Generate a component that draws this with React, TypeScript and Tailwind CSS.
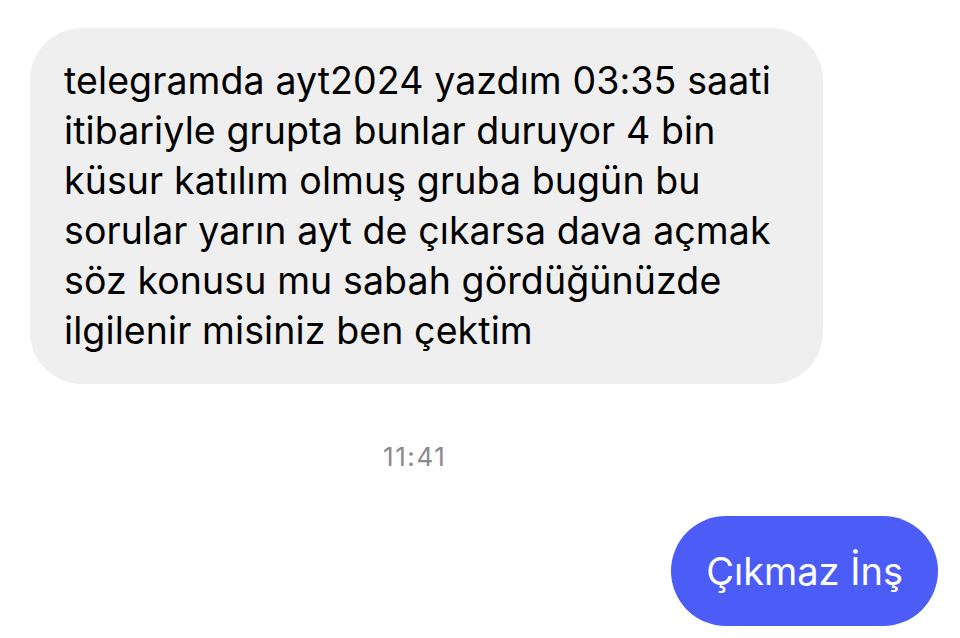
export default function App() {
	const lines = [
		"telegramda ayt2024 yazdım 03:35 saati",
		"itibariyle grupta bunlar duruyor 4 bin",
		"küsur katılım olmuş gruba bugün bu",
		"sorular yarın ayt de çıkarsa dava açmak",
		"söz konusu mu sabah gördüğünüzde",
		"ilgilenir misiniz ben çektim",
	];

	return (
		<div className="w-[960px] h-[638px] bg-white overflow-hidden font-['Inter','Noto_Sans',sans-serif]">
			{/* --Incoming Message-- */}
			<div className="pt-[28px] pl-[30px]">
				<div className="w-[793px] h-[356px] bg-[#efefef] rounded-[52px] pl-[34px] pt-[28px]">
					{lines.map(line => (
						<div key={line} className="text-[37.5px] leading-[50px] text-black tracking-[0.1px] whitespace-nowrap">
							{line}
						</div>
					))}
				</div>
			</div>
			{/* --Timestamp-- */}
			<div className="mt-[58px] pl-[383px] text-[26px] leading-[30px] text-[#8a8a8e] tracking-[1.6px]">11:41</div>
			{/* --Outgoing Message-- */}
			<div className="mt-[44px] flex justify-end pr-[22px]">
				<div className="h-[110px] px-[35px] flex items-center rounded-full bg-[#4b5cf7] text-white text-[38px] tracking-[0px]">Çıkmaz İnş</div>
			</div>
		</div>
	);
}
